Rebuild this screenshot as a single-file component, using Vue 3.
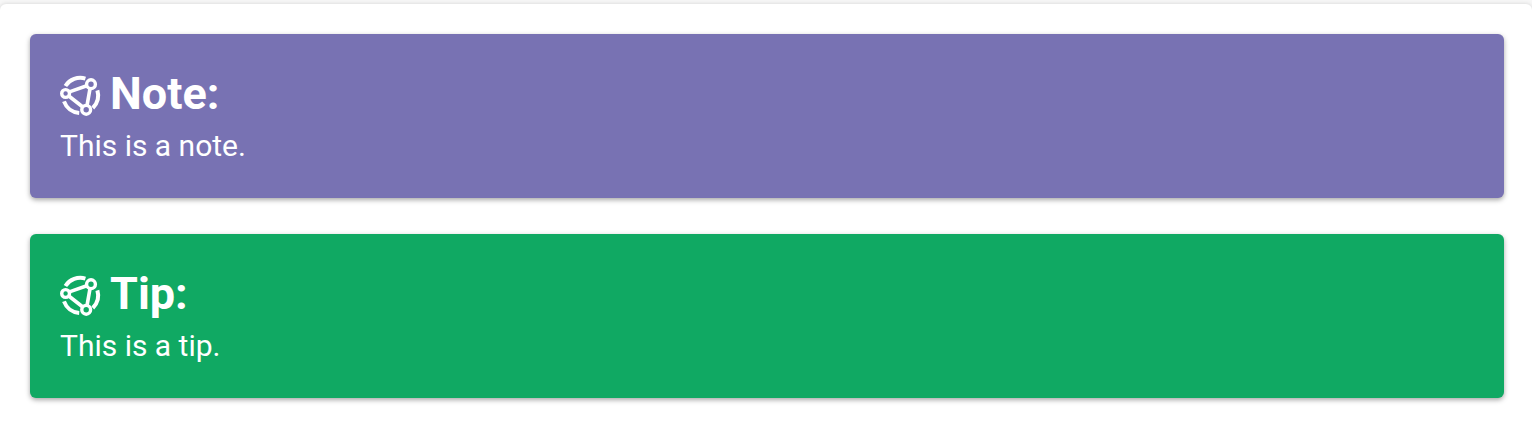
<script setup>
const notices = [
  { kind: 'note', title: 'Note:', text: 'This is a note.' },
  { kind: 'tip', title: 'Tip:', text: 'This is a tip.' },
]
</script>

<template>
  <main class="page">
    <section v-for="notice in notices" :key="notice.kind" class="notice" :class="notice.kind">
      <h2 class="title">
        <svg class="icon" viewBox="0 0 40 40" fill="none" stroke="currentColor" aria-hidden="true">
          <g stroke-width="4">
            <path d="M5.4 10A17.8 17.8 0 0 1 25.4 2.6" />
            <path d="M37.4 14.4A17.8 17.8 0 0 1 32.8 32" />
            <path d="M4 25.4A17.6 17.6 0 0 0 19.2 37" />
          </g>
          <g stroke-width="3.4">
            <circle cx="5.6" cy="17.5" r="3.9" />
            <circle cx="31" cy="8.2" r="4.4" />
            <circle cx="26.2" cy="33.8" r="4.4" />
          </g>
          <path stroke-width="3.6" d="M9.4 15.9L26.8 9.8M30 12.6L27 29.6M8.8 20L22.8 31" />
        </svg>
        <span>{{ notice.title }}</span>
      </h2>
      <p class="text">{{ notice.text }}</p>
    </section>
  </main>
</template>

<style>
body {
  margin: 0;
  background: #f7f7f7;
}
</style>

<style scoped>
.page {
  display: flex;
  flex-direction: column;
  gap: 36px;
  box-sizing: border-box;
  min-height: calc(100vh - 4px);
  margin-top: 4px;
  padding: 30px 28px 28px 30px;
  border-radius: 6px 6px 0 0;
  background: #fff;
  box-shadow: 0 0 4px rgba(0, 0, 0, 0.15);
  font-family: Roboto, "Liberation Sans", sans-serif;
}

.notice {
  padding: 30px;
  border-radius: 6px;
  color: #fff;
  box-shadow: 0 2px 5px rgba(0, 0, 0, 0.35);
}

.note {
  background: #7872b3;
}

.tip {
  background: #10a963;
}

.title {
  display: flex;
  align-items: center;
  gap: 10px;
  margin: 0;
  font-size: 45px;
  line-height: 60px;
  font-weight: 700;
}

.icon {
  width: 40px;
  height: 40px;
  margin-top: 4px;
  overflow: visible;
}

.text {
  margin: 0;
  font-size: 30px;
  line-height: 44px;
}
</style>
